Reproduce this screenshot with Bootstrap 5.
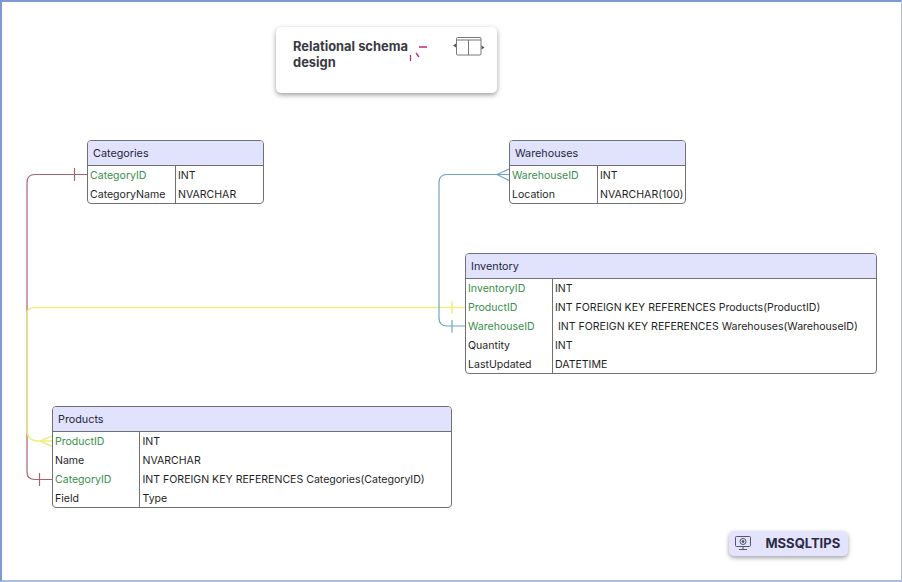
<!DOCTYPE html>
<html lang="en">
<head>
    <meta charset="UTF-8">
    <meta name="viewport" content="width=device-width, initial-scale=1.0">
    <title>Relational schema design</title>
    <link href="https://cdn.jsdelivr.net/npm/bootstrap@5.3.0/dist/css/bootstrap.min.css" rel="stylesheet">
    <style>
        html, body { height: 100%; margin: 0; background: #fff; overflow: hidden; }
        body { font-family: "Inter", "Liberation Sans", sans-serif; color: #1f1f26; }
        .canvas-frame {
            position: relative; width: 902px; height: 582px; background: #fff;
            border-style: solid; border-color: #7c9bd2 #a9bfdc #a9bfdc #7c9bd2;
            border-width: 2px 1.5px 2px 2.5px;
        }
        .links { position: absolute; left: -2.5px; top: -2px; width: 902px; height: 582px; }
        .entity {
            position: absolute; background: #fff; border: 1px solid #6f6f78; border-radius: 4px;
            overflow: hidden; font-size: 10.55px; line-height: 19px;
        }
        .entity-head {
            background: #e1e2fb; border-bottom: 1px solid #6f6f78; padding: 1.5px 0 0 5.5px;
            font-size: 10.8px; color: #26263c; display: flex; align-items: center;
        }
        .entity-row { display: flex; height: 19px; }
        .entity-name { padding-left: 2.5px; flex: none; white-space: nowrap; }
        .entity-type { padding-left: 2.5px; white-space: pre; border-left: 1px solid #6f6f78; flex: 1; }
        .is-key { color: #3a8f4a; }
        .ent-categories { left: 84.5px; top: 138px; width: 177px; height: 64px; }
        .ent-warehouses { left: 506.5px; top: 138px; width: 177px; height: 64px; }
        .ent-inventory { left: 462.5px; top: 251px; width: 412px; height: 121px; }
        .ent-products { left: 49.5px; top: 404px; width: 400px; height: 102px; }
        .ent-categories .entity-head, .ent-warehouses .entity-head { height: 24.500px; }
        .ent-inventory .entity-head, .ent-products .entity-head { height: 25px; }
        .ent-categories .entity-name, .ent-warehouses .entity-name { width: 87px; }
        .ent-inventory .entity-name { width: 86px; }
        .ent-products .entity-name { width: 86.500px; }
        .title-card {
            position: absolute; left: 273.5px; top: 25px; width: 221px; height: 66px;
            background: #fff; border-radius: 5px; box-shadow: 0 2px 5px rgba(60,60,70,.5);
            padding: 12px 17.5px; font-size: 12.9px; font-weight: 700; line-height: 16px; color: #3a3a42;
        }
        .brand-chip {
            position: absolute; left: 726.5px; top: 529px; width: 119.500px; height: 25px;
            background: #e3e3fb; border-radius: 5px; box-shadow: 0 2px 4px rgba(70,70,90,.5);
            font-size: 13px; font-weight: 700; color: #2b2b45;
        }
        .brand-chip svg { margin-left: 6px; }
        .brand-chip span { margin-left: 15px; }
    </style>
</head>
<body>
    <div class="canvas-frame">
        <svg class="links" viewBox="0 0 902 582" fill="none" stroke-width="1.2">
            <!-- categories -> products -->
            <g stroke="#a9636f">
                <path d="M87 174.5H35Q27 174.5 27 182.5V472Q27 479.5 35 479.5H52"/>
                <path d="M74.5 168V181M39.5 473V486"/>
            </g>
            <!-- products -> inventory -->
            <g stroke="#f1ec86" stroke-width="1.5">
                <path d="M465 307.5H34Q27 307.5 27 314V430Q27 441 38 441H52"/>
                <path d="M452 301V314M40 441L52 436M40 441L52 446.5"/>
            </g>
            <!-- warehouses -> inventory -->
            <g stroke="#6fa3c4">
                <path d="M509 174.5H447Q439 174.5 439 182.5V318Q439 326 447 326H465"/>
                <path d="M452 320V332.5M497 174.5L509 169M497 174.5L509 180.5"/>
            </g>
        </svg>

        <div class="title-card">Relational schema<br>design
            <svg class="position-absolute top-0 start-0" width="221" height="66" fill="none" stroke-width="1.3">
                <path stroke="#c2277c" d="M143 20H151M134.500 28V34M140 26L143 30"/>
                <g stroke="#77777e" stroke-width="1">
                    <rect x="180.500" y="10.500" width="24.500" height="17.500" rx="1"/>
                    <path d="M180.500 13H205M192.500 13V28"/>
                </g>
                <path fill="#55555c" d="M177 18.500L180 16.500V20.500ZM208.500 20.500L205.500 18.500V22.500Z"/>
            </svg>
        </div>

        <div class="entity ent-categories">
            <div class="entity-head">Categories</div>
            <div class="entity-body">
                <div class="entity-row"><div class="entity-name is-key">CategoryID</div><div class="entity-type">INT</div></div>
                <div class="entity-row"><div class="entity-name">CategoryName</div><div class="entity-type">NVARCHAR</div></div>
            </div>
        </div>

        <div class="entity ent-warehouses">
            <div class="entity-head">Warehouses</div>
            <div class="entity-body">
                <div class="entity-row"><div class="entity-name is-key">WarehouseID</div><div class="entity-type">INT</div></div>
                <div class="entity-row"><div class="entity-name">Location</div><div class="entity-type">NVARCHAR(100)</div></div>
            </div>
        </div>

        <div class="entity ent-inventory">
            <div class="entity-head">Inventory</div>
            <div class="entity-body">
                <div class="entity-row"><div class="entity-name is-key">InventoryID</div><div class="entity-type">INT</div></div>
                <div class="entity-row"><div class="entity-name is-key">ProductID</div><div class="entity-type">INT FOREIGN KEY REFERENCES Products(ProductID)</div></div>
                <div class="entity-row"><div class="entity-name is-key">WarehouseID</div><div class="entity-type"> INT FOREIGN KEY REFERENCES Warehouses(WarehouseID)</div></div>
                <div class="entity-row"><div class="entity-name">Quantity</div><div class="entity-type">INT</div></div>
                <div class="entity-row"><div class="entity-name">LastUpdated</div><div class="entity-type">DATETIME</div></div>
            </div>
        </div>

        <div class="entity ent-products">
            <div class="entity-head">Products</div>
            <div class="entity-body">
                <div class="entity-row"><div class="entity-name is-key">ProductID</div><div class="entity-type">INT</div></div>
                <div class="entity-row"><div class="entity-name">Name</div><div class="entity-type">NVARCHAR</div></div>
                <div class="entity-row"><div class="entity-name is-key">CategoryID</div><div class="entity-type">INT FOREIGN KEY REFERENCES Categories(CategoryID)</div></div>
                <div class="entity-row"><div class="entity-name">Field</div><div class="entity-type">Type</div></div>
            </div>
        </div>

        <div class="brand-chip d-flex align-items-center">
            <svg width="16" height="15" viewBox="0 0 16 15" fill="none" stroke="#55556a" stroke-width="1">
                <rect x=".5" y=".5" width="15" height="10" rx="1"/>
                <circle cx="8" cy="5.500" r="3"/>
                <circle cx="8" cy="5.500" r="1" fill="#55556a"/>
                <path d="M8 10.500V13M4 13.500H12"/>
            </svg>
            <span>MSSQLTIPS</span>
        </div>
    </div>

    <script src="https://cdn.jsdelivr.net/npm/bootstrap@5.3.0/dist/js/bootstrap.bundle.min.js"></script>
</body>
</html>
